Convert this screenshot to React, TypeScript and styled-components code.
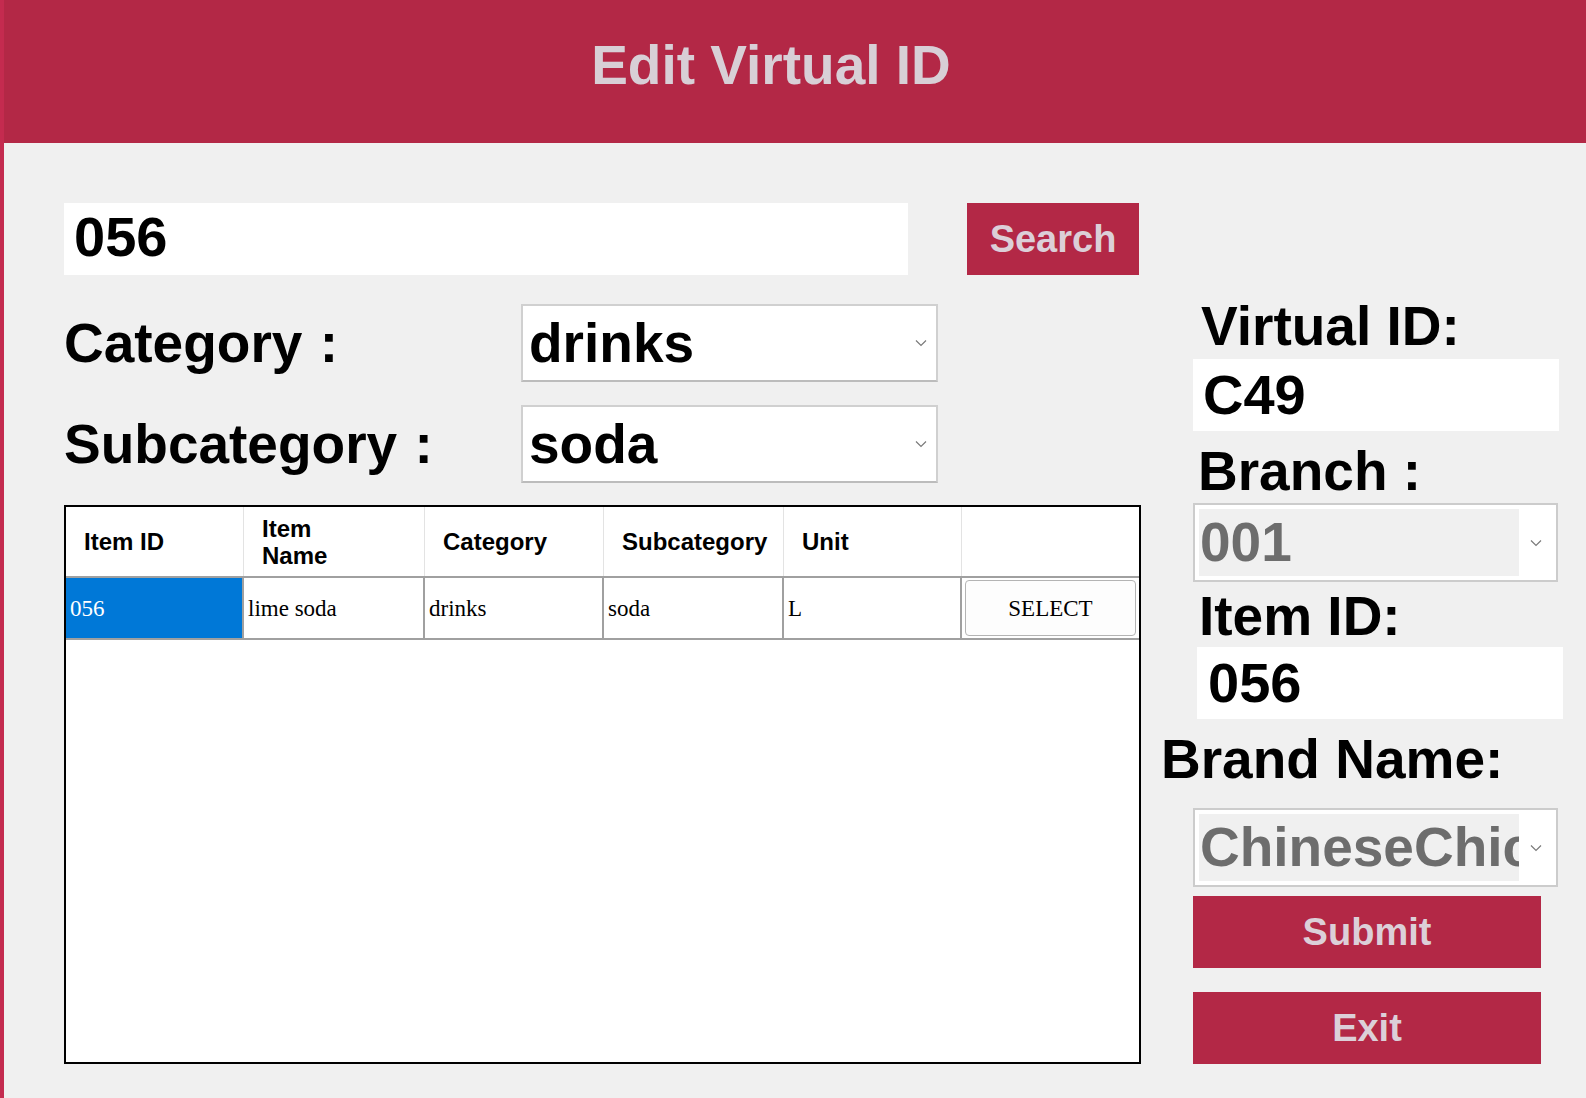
import React from "react";
import styled, { createGlobalStyle } from "styled-components";

const RED = "#B32846";
const SANS = `"Liberation Sans", Arial, sans-serif`;
const SERIF = `"Liberation Serif", "Times New Roman", serif`;

const GlobalStyle = createGlobalStyle`
  html, body { margin: 0; padding: 0; background: #F0F0F0; }
  body { font-family: ${SANS}; }
  * { box-sizing: border-box; }
`;

const Page = styled.div`
  width: 1586px;
  height: 1098px;
  background: #f0f0f0;
  border-left: 4px solid #c42b4f;
  overflow: hidden;
`;

const Header = styled.header`
  height: 143px;
  background: ${RED};
  padding: 38px 48px 0 0;
  display: flex;
  justify-content: center;
`;

const Title = styled.h1`
  margin: 0;
  font: bold 55px/55px ${SANS};
  color: #d8cfd6;
`;

const Main = styled.main`
  display: flex;
  align-items: flex-start;
  padding: 60px 0 0 60px;
`;

const LeftColumn = styled.section`
  width: 1077px;
  display: flex;
  flex-direction: column;
`;

const SearchRow = styled.div`
  display: flex;
  gap: 59px;
`;

const SearchInput = styled.div`
  width: 844px;
  height: 72px;
  background: #fff;
  padding: 0 0 4px 10px;
  display: flex;
  align-items: center;
  font: bold 56px/56px ${SANS};
  color: #000;
`;

const RedButton = styled.button<{ $w: number; $size: number; $mt?: number; $indent?: number }>`
  width: ${(p) => p.$w}px;
  height: 72px;
  margin-top: ${(p) => p.$mt ?? 0}px;
  margin-left: ${(p) => p.$indent ?? 0}px;
  background: ${RED};
  border: none;
  padding: 0;
  color: #dccfd8;
  font: bold ${(p) => p.$size}px/1 ${SANS};
  cursor: pointer;
`;

const FieldRow = styled.div<{ $mt: number }>`
  display: flex;
  align-items: center;
  margin-top: ${(p) => p.$mt}px;
`;

const FieldLabel = styled.label`
  width: 457px;
  font: bold 55px/55px ${SANS};
  word-spacing: 2px;
  color: #000;
`;

const Select = styled.div`
  width: 417px;
  height: 78px;
  background: #fff;
  border: 2px solid #d0d0d0;
  border-bottom-color: #bcbcbc;
  display: flex;
  align-items: center;
  padding: 0 9px 0 6px;
  font: bold 55px/55px ${SANS};
  color: #000;
`;

const SelectText = styled.span`
  flex: 1;
`;

const Chevron = () => (
  <svg width="12" height="8" viewBox="0 0 12 8">
    <polyline points="1,1.5 6,6.5 11,1.5" fill="none" stroke="#7a7a7a" strokeWidth="1.2" />
  </svg>
);

const TableFrame = styled.div`
  margin-top: 22px;
  height: 559px;
  border: 2px solid #000;
  background: #fff;
`;

const COLS = "178px 181px 179px 180px 178px 1fr";

const HeaderRow = styled.div`
  display: grid;
  grid-template-columns: ${COLS};
  height: 71px;
  border-bottom: 2px solid #a0a0a0;
`;

const HeaderCell = styled.div`
  display: flex;
  align-items: center;
  padding-left: 18px;
  border-right: 1px solid #e3e3e3;
  font: bold 24px/27px ${SANS};
  color: #000;
  &:last-child { border-right: none; }
`;

const DataRow = styled.div`
  display: grid;
  grid-template-columns: ${COLS};
  height: 62px;
  border-bottom: 2px solid #a0a0a0;
`;

const DataCell = styled.div<{ $selected?: boolean }>`
  display: flex;
  align-items: center;
  padding: 0 4px;
  border-right: 2px solid #a0a0a0;
  background: ${(p) => (p.$selected ? "#0078d7" : "#fff")};
  color: ${(p) => (p.$selected ? "#fff" : "#000")};
  font: 23px/1 ${SERIF};
  &:last-child { border-right: none; padding: 2px 3px 2px 3px; }
`;

const SelectButton = styled.button`
  width: 100%;
  height: 100%;
  background: #fdfdfd;
  border: 1.5px solid #b4b4b4;
  border-radius: 4px;
  font: 23px/1 ${SERIF};
  color: #000;
`;

const RightColumn = styled.aside`
  margin-left: 19px;
  padding-top: 96px;
  width: 404px;
  display: flex;
  flex-direction: column;
  align-items: flex-start;
`;

const SideLabel = styled.label<{ $mt?: number; $indent: number }>`
  margin-top: ${(p) => p.$mt ?? 0}px;
  margin-left: ${(p) => p.$indent}px;
  font: bold 55px/54px ${SANS};
  color: #000;
  white-space: nowrap;
`;

const SideInput = styled.div<{ $mt: number; $indent: number; $pad: number }>`
  margin-top: ${(p) => p.$mt}px;
  margin-left: ${(p) => p.$indent}px;
  width: 366px;
  height: 72px;
  background: #fff;
  padding-left: ${(p) => p.$pad}px;
  display: flex;
  align-items: center;
  font: bold 56px/56px ${SANS};
  color: #000;
`;

const Combo = styled.div<{ $mt: number }>`
  margin-top: ${(p) => p.$mt}px;
  margin-left: 33px;
  width: 365px;
  height: 79px;
  background: #fff;
  border: 2px solid #cccccc;
  padding: 4px;
  display: flex;
  align-items: center;
`;

const ComboText = styled.div`
  width: 320px;
  height: 100%;
  background: #f0f0f0;
  padding-left: 1px;
  display: flex;
  align-items: center;
  overflow: hidden;
  white-space: nowrap;
  font: bold 55px/55px ${SANS};
  color: #6d6d6d;
`;

const ComboArrow = styled.div`
  flex: 1;
  display: flex;
  justify-content: center;
  align-items: center;
`;

export default function App() {
  return (
    <>
      <GlobalStyle />
      <Page>
        <Header>
          <Title>Edit Virtual ID</Title>
        </Header>
        <Main>
          <LeftColumn>
            <SearchRow>
              <SearchInput>056</SearchInput>
              <RedButton $w={172} $size={38}>Search</RedButton>
            </SearchRow>
            <FieldRow $mt={29}>
              <FieldLabel>Category :</FieldLabel>
              <Select>
                <SelectText>drinks</SelectText>
                <Chevron />
              </Select>
            </FieldRow>
            <FieldRow $mt={23}>
              <FieldLabel>Subcategory :</FieldLabel>
              <Select>
                <SelectText>soda</SelectText>
                <Chevron />
              </Select>
            </FieldRow>
            <TableFrame>
              <HeaderRow>
                <HeaderCell>Item ID</HeaderCell>
                <HeaderCell>
                  Item
                  <br />
                  Name
                </HeaderCell>
                <HeaderCell>Category</HeaderCell>
                <HeaderCell>Subcategory</HeaderCell>
                <HeaderCell>Unit</HeaderCell>
                <HeaderCell />
              </HeaderRow>
              <DataRow>
                <DataCell $selected>056</DataCell>
                <DataCell>lime soda</DataCell>
                <DataCell>drinks</DataCell>
                <DataCell>soda</DataCell>
                <DataCell>L</DataCell>
                <DataCell>
                  <SelectButton>SELECT</SelectButton>
                </DataCell>
              </DataRow>
            </TableFrame>
          </LeftColumn>
          <RightColumn>
            <SideLabel $indent={41}>Virtual ID:</SideLabel>
            <SideInput $mt={6} $indent={33} $pad={10}>C49</SideInput>
            <SideLabel $mt={13} $indent={38}>Branch :</SideLabel>
            <Combo $mt={5}>
              <ComboText>001</ComboText>
              <ComboArrow>
                <Chevron />
              </ComboArrow>
            </Combo>
            <SideLabel $mt={7} $indent={39}>Item ID:</SideLabel>
            <SideInput $mt={4} $indent={37} $pad={11}>056</SideInput>
            <SideLabel $mt={13} $indent={1}>Brand Name:</SideLabel>
            <Combo $mt={22}>
              <ComboText>ChineseChicken</ComboText>
              <ComboArrow>
                <Chevron />
              </ComboArrow>
            </Combo>
            <RedButton $w={348} $size={38} $mt={9} $indent={33}>Submit</RedButton>
            <RedButton $w={348} $size={38} $mt={24} $indent={33}>Exit</RedButton>
          </RightColumn>
        </Main>
      </Page>
    </>
  );
}
